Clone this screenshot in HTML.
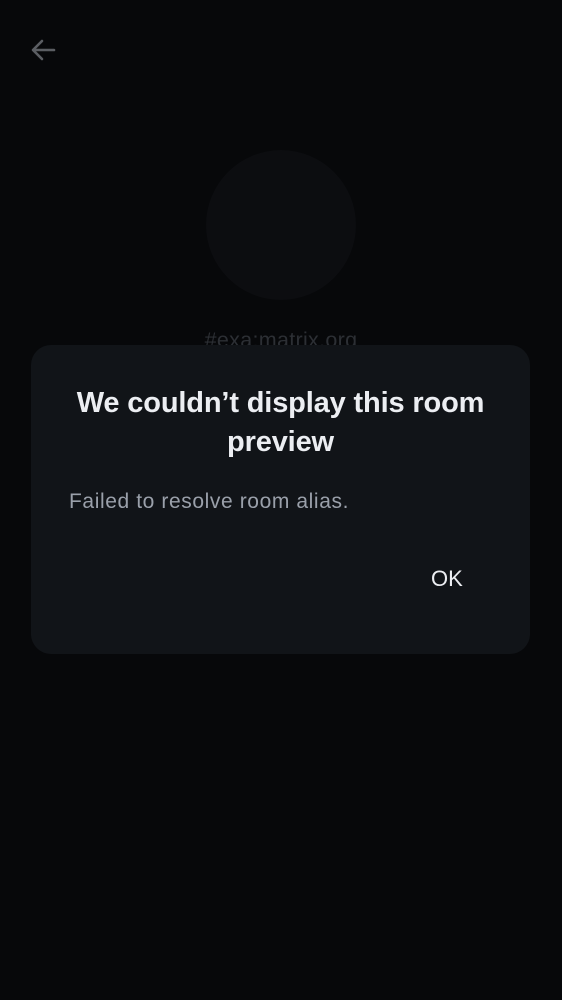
<!DOCTYPE html>
<html><head><meta charset="utf-8"><style>
html,body{margin:0;padding:0;}
body{width:562px;height:1000px;background:#07080a;position:relative;overflow:hidden;font-family:"Liberation Sans",sans-serif;}
.av{position:absolute;left:206px;top:150px;width:150px;height:150px;border-radius:50%;background:#0c0d10;}
.alias{position:absolute;left:0;width:562px;top:328px;text-align:center;color:#2c2f34;font-size:21.5px;letter-spacing:0.3px;}
.dlg{position:absolute;left:31px;top:345px;width:499px;height:309px;background:#111418;border-radius:20px;}
h1{position:absolute;left:0;top:39px;width:499px;margin:0;text-align:center;color:#eceef2;font-size:29px;font-weight:bold;line-height:39px;letter-spacing:-0.15px;}
p{position:absolute;left:38px;top:145px;margin:0;color:#9aa0aa;font-size:21px;letter-spacing:0.6px;}
.ok{position:absolute;left:400px;top:221px;color:#eceef2;font-size:22px;}
</style></head><body>
<svg style="position:absolute;left:28px;top:36px" width="30" height="28" viewBox="0 0 30 28"><path d="M26 14H6M14 5L5 14L14 23" stroke="#5b5e63" stroke-width="2.6" fill="none" stroke-linecap="round" stroke-linejoin="round"/></svg>
<div class="av"></div>
<div class="alias">#exa:matrix.org</div>
<div class="dlg">
<h1>We couldn’t display this room<br>preview</h1>
<p>Failed to resolve room alias.</p>
<div class="ok">OK</div>
</div>
</body></html>
